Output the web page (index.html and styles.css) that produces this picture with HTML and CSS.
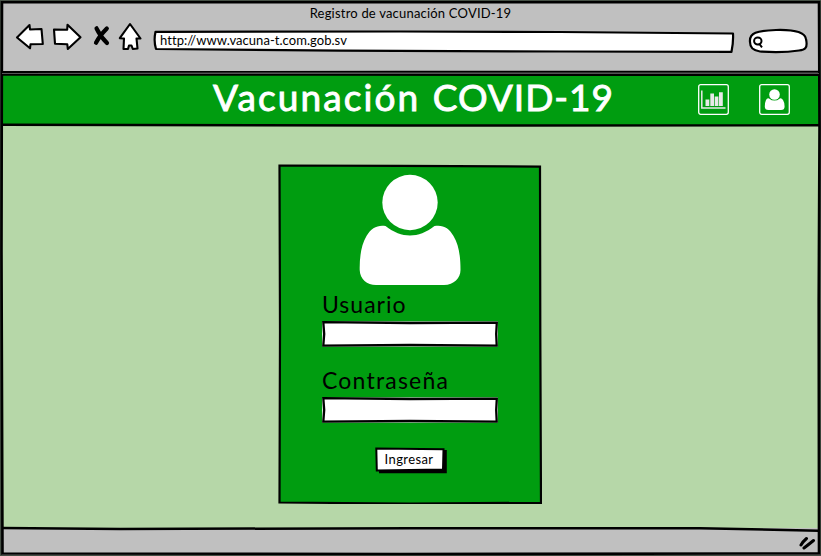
FILE: index.html
```html
<!DOCTYPE html>
<html lang="es">
<head>
<meta charset="utf-8">
<title>Registro de vacunación COVID-19</title>
<link rel="stylesheet" href="styles.css">
</head>
<body>
<div class="window">
  <header class="chrome">
    <div class="window-title"><span>Registro de vacunación COVID-19</span></div>
    <div class="toolbar">
      <svg class="nav-icons" width="130" height="34" viewBox="14 20 130 34">
        <g fill="#fff" stroke="#000" stroke-width="2.1" stroke-linejoin="round">
          <path d="M17 37.5 29.5 25 30 29.500 41.500 29 42.800 44 30.500 44.300 30 48.300Z"/>
          <path d="M54 29.500 67.200 29.700 67.500 24.800 80.500 37.300 67.800 49 67.300 44.300 55 43.800Z"/>
          <path d="M130 24 119.800 38.200 124 38.500 123.500 49 128 49 129 45.500 131.500 45.500 132.800 49 137.500 48.500 136.500 38.500 140.500 38.500Z"/>
        </g>
        <path d="M96.500 28.300Q100 36 107 43M106.800 28.500Q99.500 36 96 42.700" fill="none" stroke="#000" stroke-width="4.200" stroke-linecap="round"/>
      </svg>
      <div class="address">
        <svg class="sketch" viewBox="153 30 582 23"><path d="M155.500 31.800 400 31.500 560 32 733 33.500Q733.500 42 731.500 51.800L560 51.500 340 50.700 156 49Q153.500 41 155.500 31.800Z" fill="#fff" stroke="#000" stroke-width="2.200" stroke-linejoin="round"/></svg>
        <span class="url">http://www.vacuna-t.com.gob.sv</span>
      </div>
      <svg class="search" width="62" height="28" viewBox="748 27 62 28">
        <path d="M750 42C749 33 757 30.500 776 30 794 29.500 805 32 806 39 808 48 805 50 799 50.500 782 53 769 52 760 51.500 753 50.500 750 48 750 42Z" fill="#fff" stroke="#000" stroke-width="2.200"/>
        <path d="M761.500 41a3.700 3.400 0 1 1-7.400 0a3.700 3.400 0 1 1 7.400 0M759 43.500 762 47.300" fill="none" stroke="#000" stroke-width="2"/>
      </svg>
    </div>
  </header>
  <section class="banner">
    <h1><span class="first">Vacunación</span> <span>COVID-19</span></h1>
    <nav class="actions">
      <svg width="31" height="31" viewBox="0 0 31 31"><rect x=".7" y=".7" width="29.600" height="29.600" rx="2" fill="none" stroke="#fff" stroke-width="1.300"/><path d="M3.800 6.500v17.500H27.500" fill="none" stroke="#e9e9e9" stroke-width="1.500"/><path d="M7.500 15.500h3.800v6.500h-3.800zM12.300 9.500h3.700v12.500h-3.700zM16.700 12.500h3.700v9.500h-3.700zM21 8.200h3.800v13.800H21z" fill="#e9e9e9"/></svg>
      <svg width="31" height="31" viewBox="0 0 31 31"><rect x=".7" y=".7" width="29.600" height="29.600" rx="2" fill="none" stroke="#fff" stroke-width="1.300"/><circle cx="15.500" cy="10.500" r="5.300" fill="#fff"/><path d="M10 14.400Q8 13.800 7 16 5.800 18.500 5.800 22.500 5.800 26 9.500 26H22Q25.600 26 25.600 22.500 25.600 18.500 24 16 22.500 13.800 20.900 14.400 15.500 18.800 10 14.400Z" fill="#fff"/></svg>
    </nav>
  </section>
  <main class="page">
    <form class="login">
      <svg class="sketch" viewBox="278 164 264 340"><path d="M279.500 165.500 400 165.800 540 166.600 540.300 330 541 502.800 410 503.500 279.500 502.500 280 330Z" fill="#009d10" stroke="#000" stroke-width="2.200"/></svg>
      <svg class="avatar" width="102" height="112" viewBox="359 174 102 112"><circle cx="410" cy="202.500" r="27.700" fill="#fff"/><path d="M385.500 226C378 224.500 371 228 366.500 236 361 245 359.500 258 359.700 270 360 279 367 285 376 285H444C454 285 460.500 278 460.500 270 460.500 257 459 245 453.500 236 449 228 443 224.500 434.500 226 418 238.700 402 238.700 385.500 226Z" fill="#fff"/></svg>
      <label class="field"><span class="label user">Usuario</span>
        <span class="input"><svg class="sketch" viewBox="322 321 176 26"><path d="M322 321.300H498V346.800H322Z" fill="#d8e8d8"/><path d="M323.300 322.200 410 323 496.800 322.600 496.200 334 496.700 345.600 410 345 323.300 345.700 324.200 334Z" fill="#fff" stroke="#000" stroke-width="2.300"/></svg></span>
      </label>
      <label class="field"><span class="label pass">Contraseña</span>
        <span class="input"><svg class="sketch" viewBox="322 321 176 26"><path d="M322 321.300H498V346.800H322Z" fill="#d8e8d8"/><path d="M323.300 322.200 410 323 496.800 322.600 496.200 334 496.700 345.600 410 345 323.300 345.700 324.200 334Z" fill="#fff" stroke="#000" stroke-width="2.300"/></svg></span>
      </label>
      <button class="submit" type="button">
        <svg class="sketch" viewBox="375 447 72 27"><path d="M379 451 446.800 450V473.300H379Z"/><path d="M376.300 448.500 443.500 449.300 443 469.500 376.800 470.500Z" fill="#fff" stroke="#000" stroke-width="2"/></svg>
        <span>Ingresar</span>
      </button>
    </form>
  </main>
  <footer class="status">
    <svg width="18" height="14" viewBox="798 536 18 14"><path d="M801 545Q803 541.500 806.500 538.500M804 548Q808 545 813.500 540.500" fill="none" stroke="#000" stroke-width="3" stroke-linecap="round"/></svg>
  </footer>
  <svg class="outline" viewBox="0 0 821 556" fill="none" stroke="#000">
    <path d="M0 0H821V556H0ZM2 2V555H820V2Z" fill="#455045" stroke="none"/>
    <path d="M2 2.300 400 2.200 819 2.300 819.500 128 818.700 300 819 553.500 400 554 2.500 553.500 1.500 250Z" stroke-width="2.600"/>
    <path d="M2 72 400 71.800 819 71.800M2 74.800 300 74.900 819 75" stroke-width="1.900"/><path d="M2 73.500H819" stroke="#555" stroke-width="1"/>
    <path d="M2 124.700 400 125.500 819 125.300" stroke-width="2.400"/>
    <path d="M2 528 120 529 410 528.200 700 528.300 819 530.700" stroke-width="2.500"/>
  </svg>
</div>
</body>
</html>
```
FILE: styles.css
```css
* { box-sizing: border-box; }
body { margin: 0; font-family: Lato, "Open Sans", sans-serif; color: #000; }
.window { position: relative; display: flex; flex-direction: column; height: 556px; overflow: hidden; background: #c0c0c0; }
.outline, .sketch { position: absolute; inset: 0; width: 100%; height: 100%; pointer-events: none; }
.chrome { height: 73px; padding: 4px 11px 0 14px; }
.window-title { height: 18px; padding-right: 3px; text-align: center; font-size: 13px; line-height: 18px; letter-spacing: .2px; }
.toolbar { display: flex; align-items: flex-start; }
.nav-icons { margin: -2px 9px 0 0; }
.address { position: relative; width: 582px; height: 23px; margin: 8px 13px 0 0; padding-left: 7px; }
.url { position: relative; display: block; font-size: 13px; line-height: 21px; letter-spacing: .05px; white-space: nowrap; }
.search { margin-top: 5px; }
.banner { display: flex; align-items: center; justify-content: flex-end; height: 53px; padding-right: 31px; background: #009d10; }
h1 { flex: 1; margin: 0; padding: 0 0 6px 213px; color: #fff; font-size: 37px; font-weight: 400; line-height: 47px; letter-spacing: 1px; word-spacing: 2px; white-space: nowrap; -webkit-text-stroke: .9px #fff; }
.first { letter-spacing: 2.1px; }
.actions { display: flex; gap: 30px; }
.page { flex: 1; padding: 38px 0 0 278px; background: #b6d7a8; }
.login { position: relative; display: flex; flex-direction: column; width: 264px; height: 340px; padding: 10px 44px 0; }
.avatar { position: relative; margin-left: 37px; }
.field { position: relative; display: block; height: 76px; }
.label { display: block; height: 35px; padding-top: 3px; font-size: 23px; line-height: 30px; }
.user { letter-spacing: 1px; }
.pass { letter-spacing: 1.2px; }
.input { position: relative; display: block; width: 176px; height: 26px; }
.submit { position: relative; width: 72px; height: 27px; margin: 9px 0 0 53px; padding: 0 4px 3px 0; border: 0; background: none; font: 13px/24px Lato, sans-serif; color: #000; }
.submit span { position: relative; letter-spacing: .4px; }
.status { display: flex; justify-content: flex-end; height: 28px; padding: 8px 5px 0 0; }
```
